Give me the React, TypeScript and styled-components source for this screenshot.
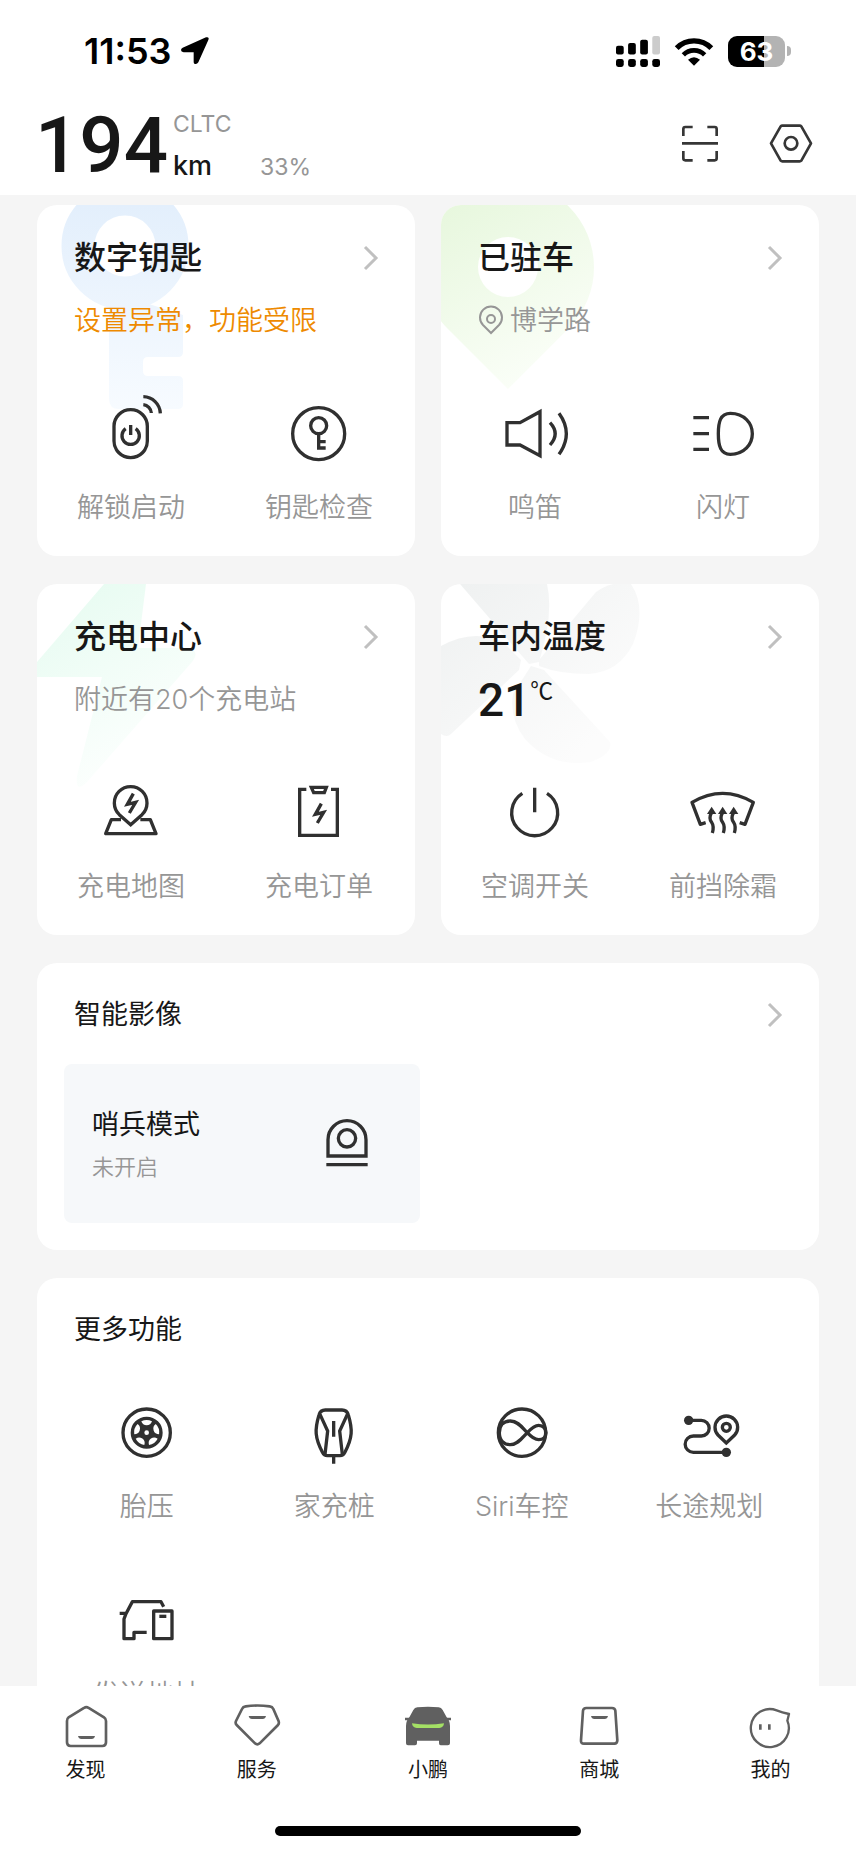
import React from 'react';
import styled, { createGlobalStyle } from 'styled-components';

const INK = '#171717';
const LINE = '#303030';
const MUTED = '#969696';
const TAB_LINE = '#606060';

const GlobalStyle = createGlobalStyle`
  *, *::before, *::after { box-sizing: border-box; }
  body {
    margin: 0;
    background: #ffffff;
    color: ${INK};
    font-family: Inter, "Noto Sans CJK SC", sans-serif;
    font-weight: 350;
  }
  h2, h3, p { margin: 0; font-weight: inherit; }
  a { color: inherit; text-decoration: none; }
  button {
    margin: 0;
    padding: 0;
    border: 0;
    background: none;
    color: inherit;
    font: inherit;
    cursor: pointer;
  }
  svg { display: block; overflow: visible; }
`;

const Screen = styled.div`
  display: flex;
  flex-direction: column;
  height: 100vh;
`;

const StatusBar = styled.div`
  display: flex;
  align-items: center;
  justify-content: space-between;
  padding: 30px 65px 28px 84px;
  color: #000000;
`;

const StatusGroup = styled.div<{ $gap: number }>`
  display: flex;
  align-items: center;
  gap: ${({ $gap }) => $gap}px;
`;

const Clock = styled.span`
  font-size: 36px;
  line-height: 42px;
  font-weight: 600;
`;

const Battery = styled.div`
  display: flex;
  align-items: center;
  gap: 2px;
`;

const BatteryBody = styled.div`
  width: 57px;
  border-radius: 9px;
  background: linear-gradient(to right, #000000 63%, #b3b3b3 63%);
  color: #ffffff;
  font-size: 26px;
  line-height: 31px;
  font-weight: 700;
  text-align: center;
`;

const BatteryTip = styled.div`
  width: 4px;
  height: 10px;
  border-radius: 0 4px 4px 0;
  background: #b3b3b3;
`;

const Header = styled.header`
  display: flex;
  align-items: center;
  justify-content: space-between;
  padding: 0 41px 9px 35px;
`;

const Range = styled.div`
  display: flex;
  align-items: center;
  gap: 5px;
  padding-top: 6px;
`;

const RangeValue = styled.span`
  font-family: Roboto, sans-serif;
  font-size: 78px;
  line-height: 80px;
  font-weight: 500;
`;

const RangeMeta = styled.div`
  display: flex;
  flex-direction: column;
  gap: 16px;
`;

const RangeCycle = styled.span`
  color: ${MUTED};
  font-size: 23px;
  line-height: 24px;
  font-weight: 400;
`;

const RangeRow = styled.div`
  display: flex;
  align-items: baseline;
  gap: 48px;
  line-height: 28px;
`;

const RangeUnit = styled.span`
  font-size: 27px;
  font-weight: 500;
`;

const RangePercent = styled.span`
  color: ${MUTED};
  font-size: 23px;
  font-weight: 400;
`;

const HeaderActions = styled.div`
  display: flex;
  gap: 43px;
`;

const Content = styled.main`
  flex: 1;
  min-height: 0;
  overflow-y: auto;
  scrollbar-width: none;
  display: flex;
  flex-direction: column;
  gap: 28px;
  padding: 10px 37px;
  background: #f5f5f5;
`;

const CardGrid = styled.div`
  flex: none;
  display: grid;
  grid-template-columns: 1fr 1fr;
  gap: 28px 26px;
`;

const Card = styled.section`
  position: relative;
  flex: none;
  overflow: hidden;
  border-radius: 20px;
  background: #ffffff;
`;

const Watermark = styled.svg`
  position: absolute;
  top: 0;
  left: 0;
`;

const CardHead = styled.a`
  position: relative;
  display: flex;
  align-items: center;
  justify-content: space-between;
  padding: 34px 36px 0 37px;
`;

const CardTitle = styled.h2`
  font-size: 32px;
  line-height: 38px;
  font-weight: 500;
`;

const SectionTitle = styled.h2`
  font-size: 27px;
  line-height: 36px;
  font-weight: 400;
`;

const CardInfo = styled.p<{ $color?: string }>`
  position: relative;
  display: flex;
  align-items: center;
  gap: 8px;
  height: 36px;
  margin: 26px 37px 63px;
  color: ${({ $color }) => $color ?? MUTED};
  font-size: 27px;
  line-height: 36px;
`;

const Temperature = styled.span`
  display: flex;
`;

const Degrees = styled.span`
  font-family: Roboto, sans-serif;
  font-size: 46px;
  font-weight: 500;
`;

const DegreeUnit = styled.span`
  font-family: "Noto Sans CJK SC", sans-serif;
  font-size: 23px;
  line-height: 14px;
  font-weight: 400;
`;

const CardActions = styled.div`
  position: relative;
  display: grid;
  grid-template-columns: 1fr 1fr;
  padding: 0 2px 30px 0;
`;

const Action = styled.button`
  display: flex;
  flex-direction: column;
  align-items: center;
  gap: 24px;
  color: ${MUTED};
  font-size: 27px;
  line-height: 36px;
`;

const CameraGrid = styled.div`
  display: grid;
  grid-template-columns: 1fr 1fr;
  gap: 16px;
  padding: 31px 27px 27px;
`;

const ModeTile = styled.button`
  display: flex;
  align-items: center;
  justify-content: space-between;
  height: 159px;
  padding: 0 41px 0 28px;
  border-radius: 8px;
  background: #f6f8fa;
  text-align: left;
`;

const ModeText = styled.span`
  display: flex;
  flex-direction: column;
  gap: 8px;
  padding-top: 2px;
`;

const ModeName = styled.span`
  font-size: 27px;
  line-height: 36px;
  font-weight: 400;
`;

const ModeState = styled.span`
  color: ${MUTED};
  font-size: 22px;
  line-height: 32px;
`;

const MoreHead = styled.div`
  padding: 34px 37px 0;
`;

const MoreGrid = styled.div`
  display: grid;
  grid-template-columns: repeat(4, 1fr);
  row-gap: 64px;
  padding: 53px 16px 30px;
`;

const TabBar = styled.nav`
  display: grid;
  grid-template-columns: repeat(5, 1fr);
  padding: 16px 0 42px;
  background: #ffffff;
`;

const Tab = styled.a`
  display: flex;
  flex-direction: column;
  align-items: center;
  gap: 6px;
  font-size: 20px;
  line-height: 28px;
  font-weight: 400;
`;

const HomeIndicator = styled.div`
  width: 306px;
  height: 10px;
  margin: 0 auto 16px;
  border-radius: 5px;
  background: #000000;
`;

type IconProps = { children: React.ReactNode };

/* Feature icons: 64px box on a 192-unit grid */
const FeatureIcon = ({ children }: IconProps) => (
  <svg width="64" height="64" viewBox="0 0 192 192" fill="none" stroke={LINE} strokeWidth="10" aria-hidden="true">
    {children}
  </svg>
);

/* Header and tab icons: 48px box on a 144-unit grid */
const BarIcon = ({ children, color = TAB_LINE }: IconProps & { color?: string }) => (
  <svg width="48" height="48" viewBox="0 0 144 144" fill="none" stroke={color} strokeWidth="8" aria-hidden="true">
    {children}
  </svg>
);

const Chevron = () => (
  <svg width="15" height="24" viewBox="0 0 15 24" fill="none" stroke="#c0c0c0" strokeWidth="3" aria-hidden="true">
    <path d="M1 1 L12 12 L1 23" />
  </svg>
);

const Bolt = ({ y = 0 }: { y?: number }) => (
  <path d={`M103 ${38 + y} L85 ${70 + y} L110 ${64 + y} L91 ${96 + y}`} strokeWidth="10" />
);

const icons = {
  unlock: (
    <FeatureIcon>
      <rect x="45" y="23" width="100" height="144" rx="50" />
      <path d="M80 80 A26 26 0 1 0 110 80 M95 69 V99" />
      <path d="M133 -16 A52 52 0 0 1 184 34 M133 8 A27 27 0 0 1 157 33" />
    </FeatureIcon>
  ),
  keyCheck: (
    <FeatureIcon>
      <circle cx="95" cy="95" r="78" />
      <circle cx="95" cy="71" r="24" />
      <path d="M95 95 V143 M95 119 H116 M95 138 H116" />
    </FeatureIcon>
  ),
  horn: (
    <FeatureIcon>
      <path d="M12 62 H51 L111 29 V161 L51 129 H12 Z" />
      <path d="M141 62 Q172 95 141 129 M168 34 Q212 95 168 157" />
    </FeatureIcon>
  ),
  light: (
    <FeatureIcon>
      <path d="M7 47 H54 M7 95 H54 M7 142 H54" />
      <path d="M118 34 C160 34 184 64 184 95 C184 126 160 157 118 157 C88 157 82 130 82 95 C82 60 88 34 118 34 Z" />
    </FeatureIcon>
  ),
  chargeMap: (
    <FeatureIcon>
      <path d="M95 131 L61 101 A49 49 0 1 1 129 101 Z" />
      <path d="M66 116 H37 L20 158 H171 L154 116 H124" strokeLinejoin="round" />
      <Bolt />
    </FeatureIcon>
  ),
  chargeOrder: (
    <FeatureIcon>
      <path d="M58 25 H38 V163 H151 V25 H132" />
      <path d="M73 19 H118 L112 35 H80 Z" />
      <Bolt y={30} />
    </FeatureIcon>
  ),
  power: (
    <FeatureIcon>
      <path d="M58 37 A69 69 0 1 0 132 37 M95 20 V94" />
    </FeatureIcon>
  ),
  defrost: (
    <FeatureIcon>
      <path d="M44 125 L28 130 L3 64 Q95 10 187 64 L162 130 L146 125" strokeLinejoin="round" />
      {[62, 95, 128].map((x) => (
        <g key={x}>
          <path d={`M${x} 94 Q${x - 10} 112 ${x} 124 Q${x + 8} 136 ${x + 2} 156`} />
          <path d={`M${x} 77 L${x + 14} 99 H${x - 14} Z`} fill={LINE} stroke="none" />
        </g>
      ))}
    </FeatureIcon>
  ),
  sentry: (
    <FeatureIcon>
      <path d="M39 132 V83 A57 57 0 0 1 153 83 V132 Z" />
      <circle cx="96" cy="79" r="26" />
      <path d="M34 158 H158" />
    </FeatureIcon>
  ),
  tyre: (
    <FeatureIcon>
      <circle cx="95" cy="95" r="71" />
      <circle cx="95" cy="95" r="43" fill={LINE} />
      {[0, 72, 144, 216, 288].map((a) => (
        <path
          key={a}
          d="M79 61 Q95 53 111 61 Q107 73 95 73 Q83 73 79 61 Z"
          transform={`rotate(${a} 95 95)`}
          fill="#ffffff"
          stroke="none"
        />
      ))}
      <circle cx="95" cy="95" r="7" fill="#ffffff" stroke="none" />
    </FeatureIcon>
  ),
  homeCharger: (
    <FeatureIcon>
      <path d="M70 27 H120 Q135 27 139 42 C152 85 152 110 128 155 Q124 164 114 164 H76 Q66 164 62 155 C38 110 38 85 51 42 Q55 27 70 27 Z" />
      <path d="M54 40 L77 90 L69 160 M136 40 L113 90 L121 160 M95 60 V107 M95 164 V188" />
    </FeatureIcon>
  ),
  siri: (
    <FeatureIcon>
      <circle cx="96" cy="95" r="71" />
      <path d="M28 95 C28 72 42 60 61 60 C85 60 98 82 112 95 C122 106 132 116 146 116 C160 116 168 106 168 95 C168 84 160 73 146 73 C132 73 122 84 112 95 C98 108 85 131 61 131 C42 131 28 118 28 95 Z" />
    </FeatureIcon>
  ),
  route: (
    <FeatureIcon>
      <path d="M35 58 H73 A23 23 0 0 1 73 105 H49 A24 24 0 0 0 49 154 H148" />
      <circle cx="35" cy="58" r="14" fill={LINE} stroke="none" />
      <circle cx="148" cy="154" r="14" fill={LINE} stroke="none" />
      <path d="M148 126 L123 102 A34 34 0 1 1 173 102 Z" />
      <circle cx="148" cy="79" r="12" />
    </FeatureIcon>
  ),
  send: (
    <FeatureIcon>
      <path d="M146 53 L138 38 H52 L33 74 L27 90 V149 H57 V130 H95 M14 73 H34" strokeLinejoin="round" />
      <rect x="116" y="66" width="55" height="83" strokeLinejoin="round" />
      <path d="M133 82 H154" />
    </FeatureIcon>
  ),
};

const tabIcons = {
  discover: (
    <BarIcon>
      <path d="M66 18 Q73 13 80 18 L126 46 Q132 50 132 57 V121 Q132 132 121 132 H26 Q15 132 15 121 V57 Q15 50 20 46 Z" />
      <path d="M48 102 H99 Q97 111 89 111 H58 Q50 111 48 102 Z" fill={TAB_LINE} stroke="none" />
    </BarIcon>
  ),
  service: (
    <BarIcon>
      <path d="M38 13 Q73 8 110 13 Q118 14 121 21 L137 58 Q139 64 135 69 L80 124 Q73 130 66 124 L11 69 Q6 64 9 57 L27 21 Q30 14 38 13 Z" />
      <path d="M47 42 H99 Q97 51 89 51 H57 Q49 51 47 42 Z" fill={TAB_LINE} stroke="none" />
    </BarIcon>
  ),
  car: (
    <BarIcon>
      <path
        d="M40 16 Q72 13 104 16 Q112 17 116 24 L128 46 Q138 56 138 72 V124 Q138 130 131 130 H110 Q105 130 105 124 V116 H39 V124 Q39 130 33 130 H12 Q6 130 6 124 V72 Q6 56 16 46 L28 24 Q32 17 40 16 Z"
        fill={TAB_LINE}
        stroke="none"
      />
      <path d="M3 51 H20 M124 51 H141" strokeWidth="7" />
      <path d="M24 64 Q72 71 120 64 Q119 77 106 78 H38 Q25 77 24 64 Z" fill="#a4e065" stroke="none" />
    </BarIcon>
  ),
  mall: (
    <BarIcon>
      <path d="M34 18 H111 Q120 18 121 26 L127 115 Q127 125 118 125 H27 Q17 125 18 115 L24 26 Q25 18 34 18 Z" />
      <path d="M48 42 H99 Q97 51 89 51 H58 Q50 51 48 42 Z" fill={TAB_LINE} stroke="none" />
    </BarIcon>
  ),
  me: (
    <BarIcon>
      <path d="M92 25 A57 57 0 1 0 124 56 L129 36 Q108 31 92 25 Z" strokeWidth="7" strokeLinejoin="round" />
      <path d="M43 67 V83 M70 67 V83" />
    </BarIcon>
  ),
};

const KeyMark = () => (
  <Watermark width="200" height="210" viewBox="0 0 200 210" aria-hidden="true">
    <defs>
      <linearGradient id="keyFade" gradientUnits="userSpaceOnUse" x1="0" y1="0" x2="0" y2="205">
        <stop offset="0" stopColor="#e3effc" />
        <stop offset="1" stopColor="#f7fbff" />
      </linearGradient>
    </defs>
    <circle cx="88" cy="41" r="47" fill="none" stroke="url(#keyFade)" strokeWidth="33" />
    <path
      fill="url(#keyFade)"
      d="M72 102 Q92 106 112 99 L146 110 V147 Q146 152 141 152 H111 Q106 152 106 157 V166 Q106 171 111 171 H141 Q146 171 146 176 V199 Q146 204 141 204 H82 Q72 204 72 194 Z"
    />
  </Watermark>
);

const PinMark = () => (
  <Watermark width="200" height="210" viewBox="0 0 200 210" aria-hidden="true">
    <defs>
      <linearGradient id="pinFade" x1="0" y1="0" x2="0.5" y2="1">
        <stop offset="0" stopColor="#e4f6d9" />
        <stop offset="1" stopColor="#fafef7" />
      </linearGradient>
    </defs>
    <path
      fill="url(#pinFade)"
      fillRule="evenodd"
      d="M67 184 L6 123 A86 86 0 1 1 128 123 Z M67 32 A30 30 0 1 0 67 92 A30 30 0 1 0 67 32 Z"
    />
  </Watermark>
);

const BoltMark = () => (
  <Watermark width="200" height="210" viewBox="0 0 200 210" aria-hidden="true">
    <defs>
      <linearGradient id="boltFade" x1="0" y1="0" x2="0.5" y2="1">
        <stop offset="0" stopColor="#e5fbf0" />
        <stop offset="1" stopColor="#fdfffe" />
      </linearGradient>
    </defs>
    <path fill="url(#boltFade)" d="M67 0 H109 L101 64 H150 Q164 66 155 78 L50 198 Q38 210 40 192 L65 93 H0 V78 Z" />
  </Watermark>
);

const FanMark = () => (
  <Watermark width="210" height="210" viewBox="0 0 210 210" aria-hidden="true">
    <defs>
      <linearGradient id="fanFade" gradientUnits="userSpaceOnUse" x1="20" y1="0" x2="160" y2="150">
        <stop offset="0" stopColor="#eff1f1" />
        <stop offset="1" stopColor="#fcfcfc" />
      </linearGradient>
    </defs>
    <g fill="url(#fanFade)">
      <path d="M19 0 H106 Q113 30 98 78 L88 80 Z" />
      <path d="M98 76 L155 8 Q172 -4 190 0 Q206 24 192 60 Q178 88 148 90 Q118 90 98 82 Z" />
      <path d="M103 86 L169 158 Q172 170 150 178 Q110 184 84 155 Q68 134 72 110 L90 82 Z" />
      <path d="M0 62 Q32 44 62 58 L80 76 L78 86 L10 150 Q6 154 0 150 Z" />
    </g>
  </Watermark>
);

const PlacePin = () => (
  <svg width="24" height="28" viewBox="0 0 24 28" fill="none" stroke={MUTED} strokeWidth="2" aria-hidden="true">
    <path d="M13 26 L5 18 A11 11 0 1 1 21 18 Z" />
    <circle cx="13" cy="12" r="4" />
  </svg>
);

type Feature = { label: string; icon: React.ReactNode };

const FeatureButton = ({ label, icon }: Feature) => (
  <Action type="button">
    {icon}
    <span>{label}</span>
  </Action>
);

type FeatureCardProps = {
  title: string;
  mark: React.ReactNode;
  info: React.ReactNode;
  infoColor?: string;
  actions: Feature[];
};

const FeatureCard = ({ title, mark, info, infoColor, actions }: FeatureCardProps) => (
  <Card>
    {mark}
    <CardHead href="#">
      <CardTitle>{title}</CardTitle>
      <Chevron />
    </CardHead>
    <CardInfo $color={infoColor}>{info}</CardInfo>
    <CardActions>
      {actions.map((a) => (
        <FeatureButton key={a.label} {...a} />
      ))}
    </CardActions>
  </Card>
);

const moreFeatures: Feature[] = [
  { label: '胎压', icon: icons.tyre },
  { label: '家充桩', icon: icons.homeCharger },
  { label: 'Siri车控', icon: icons.siri },
  { label: '长途规划', icon: icons.route },
  { label: '发送地址', icon: icons.send },
];

const tabs: Feature[] = [
  { label: '发现', icon: tabIcons.discover },
  { label: '服务', icon: tabIcons.service },
  { label: '小鹏', icon: tabIcons.car },
  { label: '商城', icon: tabIcons.mall },
  { label: '我的', icon: tabIcons.me },
];

export default function App() {
  return (
    <Screen>
      <GlobalStyle />
      <StatusBar>
        <StatusGroup $gap={10}>
          <Clock>11:53</Clock>
          <svg width="28" height="28" viewBox="0 0 84 84" aria-hidden="true">
            <path d="M75 1 Q86 -1 82 9 L52 76 Q47 84 40 80 Q38 78 38 74 V46 H8 Q0 45 0 39 Q0 35 5 32 Z" fill="#000000" />
          </svg>
        </StatusGroup>
        <StatusGroup $gap={15}>
          <svg width="44" height="31" viewBox="0 0 131 92" aria-hidden="true">
            <rect x="0" y="29" width="23" height="26" rx="6" />
            <rect x="36" y="21" width="23" height="34" rx="6" />
            <rect x="72" y="11" width="23" height="44" rx="6" />
            <rect x="108" y="0" width="23" height="55" rx="6" fill="#cccccc" />
            {[0, 36, 72, 108].map((x) => (
              <rect key={x} x={x} y="68" width="23" height="24" rx="7" />
            ))}
          </svg>
          <svg width="38" height="29" viewBox="0 0 114 86" fill="none" stroke="#000000" aria-hidden="true">
            <path d="M5 33 A73 73 0 0 1 109 33" strokeWidth="16" />
            <path d="M25 53 A45 45 0 0 1 89 53" strokeWidth="14" />
            <path d="M39 68 Q57 52 75 68 L57 86 Z" fill="#000000" stroke="none" />
          </svg>
          <Battery>
            <BatteryBody>63</BatteryBody>
            <BatteryTip />
          </Battery>
        </StatusGroup>
      </StatusBar>

      <Header>
        <Range>
          <RangeValue>194</RangeValue>
          <RangeMeta>
            <RangeCycle>CLTC</RangeCycle>
            <RangeRow>
              <RangeUnit>km</RangeUnit>
              <RangePercent>33%</RangePercent>
            </RangeRow>
          </RangeMeta>
        </Range>
        <HeaderActions>
          <button type="button" aria-label="扫一扫">
            <BarIcon color="#363636">
              <path d="M22 51 V30 Q22 24 28 24 H50 M94 24 H116 Q122 24 122 30 V51 M22 96 V118 Q22 124 28 124 H50 M94 124 H116 Q122 124 122 118 V96" />
              <path d="M18 73 H126" />
            </BarIcon>
          </button>
          <button type="button" aria-label="设置">
            <BarIcon color="#363636">
              <path d="M12 73 L41 22 Q43 20 46 20 H98 Q101 20 103 22 L132 73 L103 125 Q101 127 98 127 H46 Q43 127 41 125 Z" strokeLinejoin="round" />
              <circle cx="72" cy="73" r="19" />
            </BarIcon>
          </button>
        </HeaderActions>
      </Header>

      <Content>
        <CardGrid>
          <FeatureCard
            title="数字钥匙"
            mark={<KeyMark />}
            info="设置异常，功能受限"
            infoColor="#ee8a00"
            actions={[
              { label: '解锁启动', icon: icons.unlock },
              { label: '钥匙检查', icon: icons.keyCheck },
            ]}
          />
          <FeatureCard
            title="已驻车"
            mark={<PinMark />}
            info={
              <>
                <PlacePin />
                <span>博学路</span>
              </>
            }
            actions={[
              { label: '鸣笛', icon: icons.horn },
              { label: '闪灯', icon: icons.light },
            ]}
          />
          <FeatureCard
            title="充电中心"
            mark={<BoltMark />}
            info="附近有20个充电站"
            actions={[
              { label: '充电地图', icon: icons.chargeMap },
              { label: '充电订单', icon: icons.chargeOrder },
            ]}
          />
          <FeatureCard
            title="车内温度"
            mark={<FanMark />}
            infoColor={INK}
            info={
              <Temperature>
                <Degrees>21</Degrees>
                <DegreeUnit>℃</DegreeUnit>
              </Temperature>
            }
            actions={[
              { label: '空调开关', icon: icons.power },
              { label: '前挡除霜', icon: icons.defrost },
            ]}
          />
        </CardGrid>

        <Card>
          <CardHead href="#">
            <SectionTitle>智能影像</SectionTitle>
            <Chevron />
          </CardHead>
          <CameraGrid>
            <ModeTile type="button">
              <ModeText>
                <ModeName>哨兵模式</ModeName>
                <ModeState>未开启</ModeState>
              </ModeText>
              {icons.sentry}
            </ModeTile>
          </CameraGrid>
        </Card>

        <Card>
          <MoreHead>
            <SectionTitle>更多功能</SectionTitle>
          </MoreHead>
          <MoreGrid>
            {moreFeatures.map((f) => (
              <FeatureButton key={f.label} {...f} />
            ))}
          </MoreGrid>
        </Card>
      </Content>

      <TabBar>
        {tabs.map((t) => (
          <Tab key={t.label} href="#">
            {t.icon}
            <span>{t.label}</span>
          </Tab>
        ))}
      </TabBar>
      <HomeIndicator />
    </Screen>
  );
}
